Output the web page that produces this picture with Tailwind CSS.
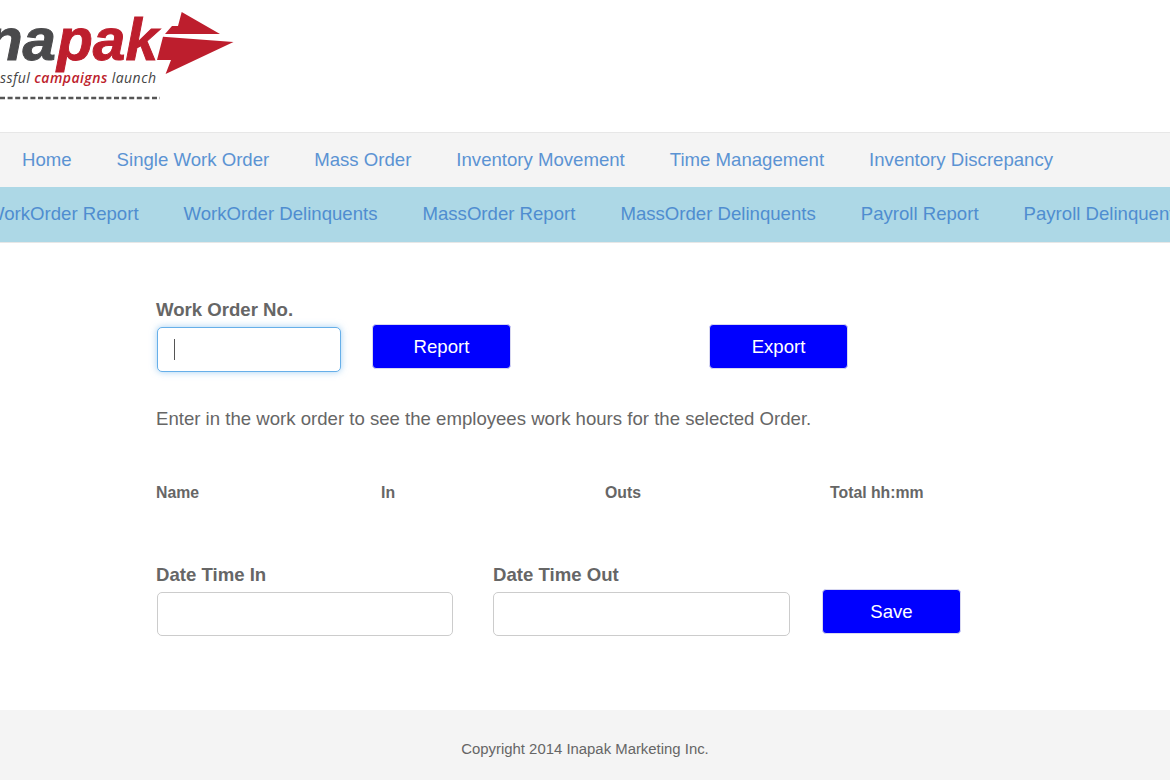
<!DOCTYPE html>
<html>
<head>
<meta charset="utf-8">
<script src="https://cdn.jsdelivr.net/npm/@tailwindcss/browser@4"></script>
</head>
<body class="bg-white font-['Liberation_Sans',Arial,sans-serif] text-[#666] text-[18.6px] overflow-hidden">
<div class="w-[1170px] h-[780px] flex flex-col overflow-hidden">
  <header class="h-[132px] shrink-0">
    <svg width="240" height="105" viewBox="0 0 240 105" class="block">
      <text x="56" y="60" text-anchor="end" font-family="Liberation Sans" font-weight="700" font-style="italic" font-size="60" fill="#4a4a4c" stroke="#4a4a4c" stroke-width="1">Ina</text>
      <text x="57" y="60" font-family="Liberation Sans" font-weight="700" font-style="italic" font-size="60" fill="#bd1e2d" stroke="#bd1e2d" stroke-width="1" textLength="101" lengthAdjust="spacingAndGlyphs">pak</text>
      <polygon points="181.7,12 220,34 165,34 172,26 178,26" fill="#bd1e2d"/>
      <polygon points="163,36.7 233.5,42 165.6,74 171,60 157,60" fill="#bd1e2d"/>
      <text x="0" y="83" font-family="Open Sans" font-style="italic" font-size="14" fill="#444" textLength="156" lengthAdjust="spacing">ssful <tspan fill="#bd1e2d" font-weight="600">campaigns</tspan> launch</text>
      <line x1="0" y1="98" x2="160" y2="98" stroke="#555" stroke-width="2.6" stroke-dasharray="5 2.6"/>
    </svg>
  </header>
  <nav class="h-[55px] shrink-0 bg-[#f4f4f4] border-t border-[#e7e7e7] flex items-center pl-[22px] gap-[45px] whitespace-nowrap text-[#5b93d3]">
    <a>Home</a><a>Single Work Order</a><a>Mass Order</a><a>Inventory Movement</a><a>Time Management</a><a>Inventory Discrepancy</a>
  </nav>
  <nav class="h-[56px] shrink-0 bg-[#add8e6] border-b border-[#e7e7e7] flex items-center gap-[45px] pb-[2px] whitespace-nowrap text-[#4f8dd0] overflow-hidden">
    <a class="-ml-[13px]">WorkOrder Report</a><a>WorkOrder Delinquents</a><a>MassOrder Report</a><a>MassOrder Delinquents</a><a>Payroll Report</a><a>Payroll Delinquents</a>
  </nav>
  <main class="flex-1 pl-[156px] pt-[56px]">
    <div class="font-bold leading-[21px] mb-[7px]">Work Order No.</div>
    <div class="flex items-start">
      <div class="w-[184px] h-[45px] ml-px bg-white rounded-[5px] border border-[#66afe9] shadow-[0_0_7px_rgba(102,175,233,0.6)] flex items-center pl-[16px]">
        <span class="block w-px h-[21px] bg-[#555]"></span>
      </div>
      <button class="w-[139px] h-[45px] -mt-[3px] ml-[31px] bg-[#0000ff] text-white rounded-[4px] border border-[#d8d8f0]">Report</button>
      <button class="w-[139px] h-[45px] -mt-[3px] ml-[198px] bg-[#0000ff] text-white rounded-[4px] border border-[#d8d8f0]">Export</button>
    </div>
    <p class="mt-[36px] leading-[21px]">Enter in the work order to see the employees work hours for the selected Order.</p>
    <div class="mt-[54px] grid grid-cols-[225px_224px_225px_200px] text-[15.8px] font-bold leading-[20px]">
      <div>Name</div><div>In</div><div>Outs</div><div>Total hh:mm</div>
    </div>
    <div class="mt-[61px] flex items-start">
      <div class="w-[337px]">
        <div class="font-bold leading-[21px] mb-[7px]">Date Time In</div>
        <div class="w-[296px] h-[44px] ml-px bg-white rounded-[5px] border border-[#ccc]"></div>
      </div>
      <div class="w-[329px]">
        <div class="font-bold leading-[21px] mb-[7px]">Date Time Out</div>
        <div class="w-[297px] h-[44px] bg-white rounded-[5px] border border-[#ccc]"></div>
      </div>
      <button class="w-[139px] h-[45px] mt-[25px] bg-[#0000ff] text-white rounded-[4px] border border-[#d8d8f0]">Save</button>
    </div>
  </main>
  <footer class="h-[70px] shrink-0 bg-[#f4f4f4] flex items-center justify-center text-[14.9px] text-[#666] pt-[9px]">Copyright 2014 Inapak Marketing Inc.</footer>
</div>
</body>
</html>
